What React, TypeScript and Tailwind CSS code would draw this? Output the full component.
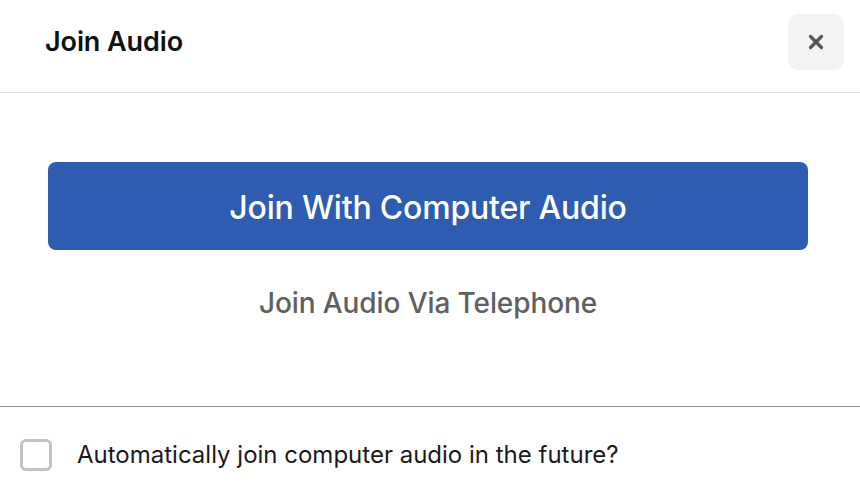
import { useState } from "react";

export default function App() {
  const [auto, setAuto] = useState(false);

  return (
    <div
      className="w-[860px] h-[494px] bg-white flex flex-col text-[#111]"
      style={{ fontFamily: "Inter, 'Noto Sans', sans-serif" }}
    >
      {/* header */}
      <div className="h-[93px] flex items-center justify-between pl-[45px] pr-[16px] border-b border-[#e2e2e2]">
        <h1 className="text-[27px] font-semibold tracking-[-0.1px] -mt-[8px]">Join Audio</h1>
        <button className="w-[56px] h-[56px] rounded-[10px] bg-[#f3f3f3] flex items-center justify-center -mt-[9px]">
          <svg width="16" height="16" viewBox="0 0 16 16">
            <path d="M2.5 2.5 L13.5 13.5 M13.5 2.5 L2.5 13.5" stroke="#555" strokeWidth="3.2" strokeLinecap="round" />
          </svg>
        </button>
      </div>

      {/* body */}
      <div className="flex-1 flex flex-col items-center pt-[69px] pl-[48px] pr-[52px]">
        <button className="w-full h-[88px] pt-[3px] rounded-[8px] bg-[#2e5cb1] text-white text-[32px] font-medium tracking-[-0.2px]">
          Join With Computer Audio
        </button>
        <button className="mt-[32px] text-[28px] font-medium text-[#606060] tracking-[-0.1px]">
          Join Audio Via Telephone
        </button>
      </div>

      {/* footer */}
      <div className="h-[88px] border-t border-[#8c8c8c] flex items-center pl-[20px] pt-[9px]">
        <label className="flex items-center gap-[25px] cursor-pointer">
          <button
            onClick={() => setAuto(!auto)}
            className="w-[32px] h-[32px] rounded-[6px] border-[3px] border-[#c2c2c2] bg-white"
          />
          <span className="text-[24px] text-[#1a1a1a]">
            Automatically join computer audio in the future?
          </span>
        </label>
      </div>
    </div>
  );
}
